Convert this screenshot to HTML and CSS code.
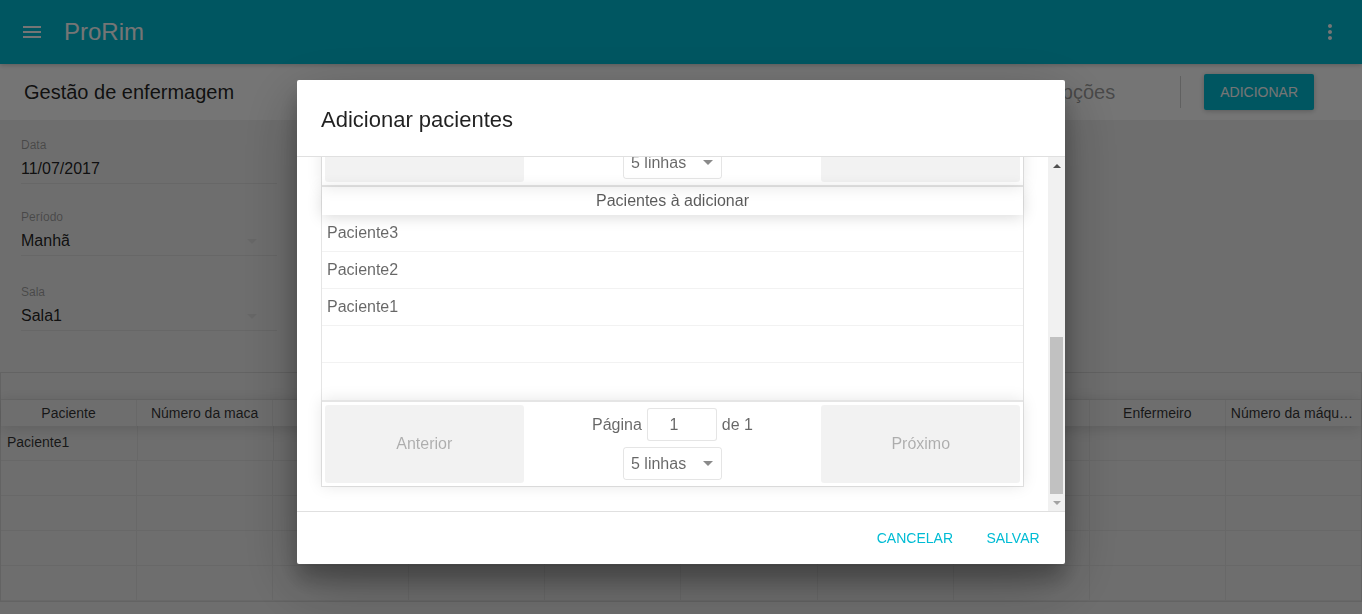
FILE: index.html
```html
<!DOCTYPE html>
<html lang="pt">
<head>
<meta charset="utf-8">
<title>ProRim</title>
<link rel="stylesheet" href="styles.css">
</head>
<body>
<div class="app">
  <header class="appbar">
    <span class="icon-btn left">
      <svg viewBox="0 0 24 24" width="24" height="24"><path d="M3 18h18v-2H3v2zm0-5h18v-2H3v2zm0-7v2h18V6H3z"/></svg>
    </span>
    <h1 class="brand">ProRim</h1>
    <span class="spacer"></span>
    <span class="icon-btn right">
      <svg viewBox="0 0 24 24" width="24" height="24"><path d="M12 8c1.1 0 2-.9 2-2s-.9-2-2-2-2 .9-2 2 .9 2 2 2zm0 2c-1.1 0-2 .9-2 2s.9 2 2 2 2-.9 2-2-.9-2-2-2zm0 6c-1.1 0-2 .9-2 2s.9 2 2 2 2-.9 2-2-.9-2-2-2z"/></svg>
    </span>
  </header>

  <div class="toolbar">
    <div class="toolbar-title">Gestão de enfermagem</div>
    <div class="toolbar-right">
      <span class="toolbar-tab">Opções</span>
      <span class="toolbar-sep"></span>
      <button class="raised-btn">Adicionar</button>
    </div>
  </div>

  <main class="page">
    <div class="filters">
      <div class="field first">
        <div class="field-label">Data</div>
        <div class="field-value">11/07/2017</div>
        <div class="field-line"></div>
      </div>
      <div class="field">
        <div class="field-label">Período</div>
        <div class="field-value"><span>Manhã</span><span class="drop"></span></div>
        <div class="field-line"></div>
      </div>
      <div class="field third">
        <div class="field-label">Sala</div>
        <div class="field-value"><span>Sala1</span><span class="drop"></span></div>
        <div class="field-line"></div>
      </div>
    </div>

    <div class="grid">
      <div class="grid-group"></div>
      <div class="grid-head">
        <div class="gcell">Paciente</div>
        <div class="gcell">Número da maca</div>
        <div class="gcell">Horário</div>
        <div class="gcell">Peso inicial</div>
        <div class="gcell">Peso final</div>
        <div class="gcell">PA inicial</div>
        <div class="gcell">PA final</div>
        <div class="gcell">Obs.</div>
        <div class="gcell">Enfermeiro</div>
        <div class="gcell">Número da máquina</div>
      </div>
      <div class="grid-row">
        <div class="gcell body">Paciente1</div><div class="gcell"></div><div class="gcell"></div><div class="gcell"></div><div class="gcell"></div><div class="gcell"></div><div class="gcell"></div><div class="gcell"></div><div class="gcell"></div><div class="gcell"></div>
      </div>
      <div class="grid-row">
        <div class="gcell"></div><div class="gcell"></div><div class="gcell"></div><div class="gcell"></div><div class="gcell"></div><div class="gcell"></div><div class="gcell"></div><div class="gcell"></div><div class="gcell"></div><div class="gcell"></div>
      </div>
      <div class="grid-row">
        <div class="gcell"></div><div class="gcell"></div><div class="gcell"></div><div class="gcell"></div><div class="gcell"></div><div class="gcell"></div><div class="gcell"></div><div class="gcell"></div><div class="gcell"></div><div class="gcell"></div>
      </div>
      <div class="grid-row">
        <div class="gcell"></div><div class="gcell"></div><div class="gcell"></div><div class="gcell"></div><div class="gcell"></div><div class="gcell"></div><div class="gcell"></div><div class="gcell"></div><div class="gcell"></div><div class="gcell"></div>
      </div>
      <div class="grid-row">
        <div class="gcell"></div><div class="gcell"></div><div class="gcell"></div><div class="gcell"></div><div class="gcell"></div><div class="gcell"></div><div class="gcell"></div><div class="gcell"></div><div class="gcell"></div><div class="gcell"></div>
      </div>
    </div>
  </main>
</div>

<div class="overlay"></div>

<div class="dialog">
  <h3 class="dlg-title">Adicionar pacientes</h3>
  <div class="dlg-body">
    <div class="dlg-scroll">
      <div class="rt">
        <div class="pagination top">
          <div class="pg-side"><button class="pg-btn">Anterior</button></div>
          <div class="pg-center">
            <div class="pg-info">Página <span class="pg-input">1</span> de 1</div>
            <div class="pg-select"><span>5 linhas</span><span class="pg-arrow"></span></div>
          </div>
          <div class="pg-side"><button class="pg-btn">Próximo</button></div>
        </div>
        <div class="rt-head">Pacientes à adicionar</div>
        <div class="rt-row">Paciente3</div>
        <div class="rt-row">Paciente2</div>
        <div class="rt-row">Paciente1</div>
        <div class="rt-row"></div>
        <div class="rt-row last"></div>
        <div class="pagination bottom">
          <div class="pg-side"><button class="pg-btn">Anterior</button></div>
          <div class="pg-center">
            <div class="pg-info">Página <span class="pg-input">1</span> de 1</div>
            <div class="pg-select"><span>5 linhas</span><span class="pg-arrow"></span></div>
          </div>
          <div class="pg-side"><button class="pg-btn">Próximo</button></div>
        </div>
      </div>
    </div>
    <div class="sbar">
      <div class="sb-btn"><span class="sb-up"></span></div>
      <div class="sb-track"><div class="sb-thumb"></div></div>
      <div class="sb-btn"><span class="sb-down"></span></div>
    </div>
  </div>
  <div class="dlg-actions">
    <button class="flat-btn">Cancelar</button>
    <button class="flat-btn">Salvar</button>
  </div>
</div>
</body>
</html>
```
FILE: styles.css
```css
* { box-sizing: border-box; }
html, body {
  margin: 0;
  height: 100%;
  overflow: hidden;
}
body {
  font-family: "Liberation Sans", Arial, sans-serif;
  background: #f0f0f0;
  color: rgba(0,0,0,0.87);
}
.app { height: 100%; display: flex; flex-direction: column; }

/* App bar */
.appbar {
  position: relative;
  z-index: 1;
  height: 64px;
  flex: none;
  display: flex;
  align-items: center;
  padding: 0 24px;
  background: #00bcd4;
  box-shadow: 0 1px 6px rgba(0,0,0,0.12), 0 1px 4px rgba(0,0,0,0.12);
}
.icon-btn { width: 48px; height: 48px; padding: 12px; display: flex; }
.icon-btn.left { margin-left: -16px; }
.icon-btn.right { margin-right: -16px; }
.icon-btn svg { fill: #fff; }
.brand {
  margin: 0 0 0 8px;
  font-size: 24px;
  font-weight: 400;
  line-height: 64px;
  color: #fff;
}
.spacer { flex: 1; }

/* Toolbar */
.toolbar {
  height: 56px;
  flex: none;
  display: flex;
  align-items: center;
  justify-content: space-between;
  padding: 0 48px 0 24px;
  background: #ffffff;
}
.toolbar-title { font-size: 20px; color: rgba(0,0,0,0.87); }
.toolbar-right { display: flex; align-items: center; }
.toolbar-tab { font-size: 20px; color: rgba(0,0,0,0.4); }
.toolbar-sep {
  width: 1px;
  height: 32px;
  margin-left: 65px;
  background: rgba(0,0,0,0.175);
}
.raised-btn {
  margin-left: 23px;
  height: 36px;
  padding: 0 16px;
  border: 0;
  border-radius: 2px;
  background: #00bcd4;
  color: #fff;
  font-family: inherit;
  font-size: 14px;
  text-transform: uppercase;
  box-shadow: 0 1px 6px rgba(0,0,0,0.12), 0 1px 4px rgba(0,0,0,0.12);
}

/* Page */
.page { flex: 1; }
.filters { padding-left: 21px; }
.field { width: 256px; padding-top: 25px; }
.field.first { padding-top: 17px; }
.field.third { padding-top: 28px; }
.field-label {
  font-size: 12px;
  line-height: 16px;
  color: rgba(0,0,0,0.35);
}
.field-value {
  margin-top: 4px;
  font-size: 16px;
  line-height: 24px;
  display: flex;
  align-items: center;
  justify-content: space-between;
}
.drop {
  width: 0; height: 0;
  margin-right: 20px;
  border-left: 5px solid transparent;
  border-right: 5px solid transparent;
  border-top: 5px solid #e0e0e0;
}
.field-line { margin-top: 2px; height: 1px; background: #e0e0e0; }

.grid {
  margin-top: 41px;
  border: 1px solid rgba(0,0,0,0.1);
  font-size: 14px;
}
.grid-group { height: 27px; border-bottom: 1px solid rgba(0,0,0,0.05); }
.grid-head {
  display: flex;
  height: 26px;
  box-shadow: 0 2px 15px 0 rgba(0,0,0,0.15);
  color: rgba(0,0,0,0.8);
}
.grid-head .gcell { text-align: center; line-height: 26px; }
.grid-row {
  display: flex;
  height: 35px;
  border-bottom: 1px solid rgba(0,0,0,0.05);
}
.gcell {
  flex: 1 1 0;
  min-width: 0;
  padding: 0 5px;
  border-right: 1px solid rgba(0,0,0,0.05);
  white-space: nowrap;
  overflow: hidden;
  text-overflow: ellipsis;
}
.gcell:last-child { border-right: 0; }
.gcell.body { line-height: 32px; color: rgba(0,0,0,0.8); padding-left: 6px; }

/* Overlay + dialog */
.overlay {
  position: fixed;
  inset: 0;
  z-index: 10;
  background: rgba(0,0,0,0.54);
}
.dialog {
  position: fixed;
  z-index: 11;
  top: 80px;
  left: 50%;
  margin-left: -384px;
  width: 768px;
  background: #fff;
  border-radius: 2px;
  box-shadow: 0 19px 60px rgba(0,0,0,0.3), 0 15px 20px rgba(0,0,0,0.22);
}
.dlg-title {
  margin: 0;
  padding: 24px 24px 20px;
  font-size: 22px;
  font-weight: 400;
  line-height: 32px;
  color: rgba(0,0,0,0.87);
  border-bottom: 1px solid #e0e0e0;
}
.dlg-body { display: flex; height: 354px; }
.dlg-scroll {
  flex: 1;
  overflow: hidden;
  display: flex;
  flex-direction: column;
  justify-content: flex-end;
  padding: 0 24px 24px;
}
.rt {
  flex: none;
  border: 1px solid rgba(0,0,0,0.1);
  font-size: 16px;
  color: rgba(0,0,0,0.6);
}
.pagination {
  display: flex;
  padding: 3px;
  box-shadow: 0 0 15px 0 rgba(0,0,0,0.1);
}
.pagination.top { border-bottom: 2px solid rgba(0,0,0,0.1); }
.pagination.bottom { border-top: 2px solid rgba(0,0,0,0.1); }
.pg-side { flex: 1 1 0; display: flex; }
.pg-btn {
  width: 100%;
  border: 0;
  border-radius: 3px;
  background: rgba(0,0,0,0.1);
  color: rgba(0,0,0,0.6);
  opacity: 0.5;
  font-family: inherit;
  font-size: 16px;
  padding: 6px;
}
.pg-center {
  flex: 1.5 1 0;
  display: flex;
  flex-direction: column;
  align-items: center;
  justify-content: center;
}
.pg-info {
  margin: 3px 10px;
  white-space: nowrap;
  display: flex;
  align-items: center;
  gap: 5px;
}
.pg-input {
  width: 70px;
  height: 33px;
  border: 1px solid rgba(0,0,0,0.1);
  border-radius: 3px;
  background: #fff;
  display: flex;
  align-items: center;
  justify-content: center;
  padding-right: 16px;
}
.pg-select {
  margin: 3px 10px;
  width: 99px;
  height: 33px;
  border: 1px solid rgba(0,0,0,0.1);
  border-radius: 3px;
  display: flex;
  align-items: center;
  justify-content: space-between;
  padding: 0 8px 0 7px;
}
.pg-arrow {
  width: 0; height: 0;
  border-left: 5px solid transparent;
  border-right: 5px solid transparent;
  border-top: 5px solid #8a8a8a;
}
.rt-head {
  height: 28px;
  line-height: 28px;
  text-align: center;
  color: rgba(0,0,0,0.65);
  box-shadow: 0 2px 15px 0 rgba(0,0,0,0.15);
}
.rt-row {
  height: 37px;
  line-height: 36px;
  padding: 0 5px;
  border-bottom: 1px solid rgba(0,0,0,0.05);
}
.rt-row.last { border-bottom: 0; }

.sbar {
  width: 17px;
  background: #f1f1f1;
  display: flex;
  flex-direction: column;
}
.sb-btn {
  height: 17px;
  display: flex;
  align-items: center;
  justify-content: center;
}
.sb-up {
  width: 0; height: 0;
  border-left: 4px solid transparent;
  border-right: 4px solid transparent;
  border-bottom: 4px solid #505050;
}
.sb-down {
  width: 0; height: 0;
  border-left: 4px solid transparent;
  border-right: 4px solid transparent;
  border-top: 4px solid #a3a3a3;
}
.sb-track {
  flex: 1;
  display: flex;
  flex-direction: column;
  justify-content: flex-end;
  padding: 0 2px;
}
.sb-thumb { height: 157px; background: #c1c1c1; }

.dlg-actions {
  display: flex;
  justify-content: flex-end;
  padding: 8px;
  border-top: 1px solid #e0e0e0;
}
.flat-btn {
  height: 36px;
  min-width: 88px;
  padding: 0 16px;
  border: 0;
  background: transparent;
  color: #00bcd4;
  font-family: inherit;
  font-size: 14px;
  text-transform: uppercase;
}
```
